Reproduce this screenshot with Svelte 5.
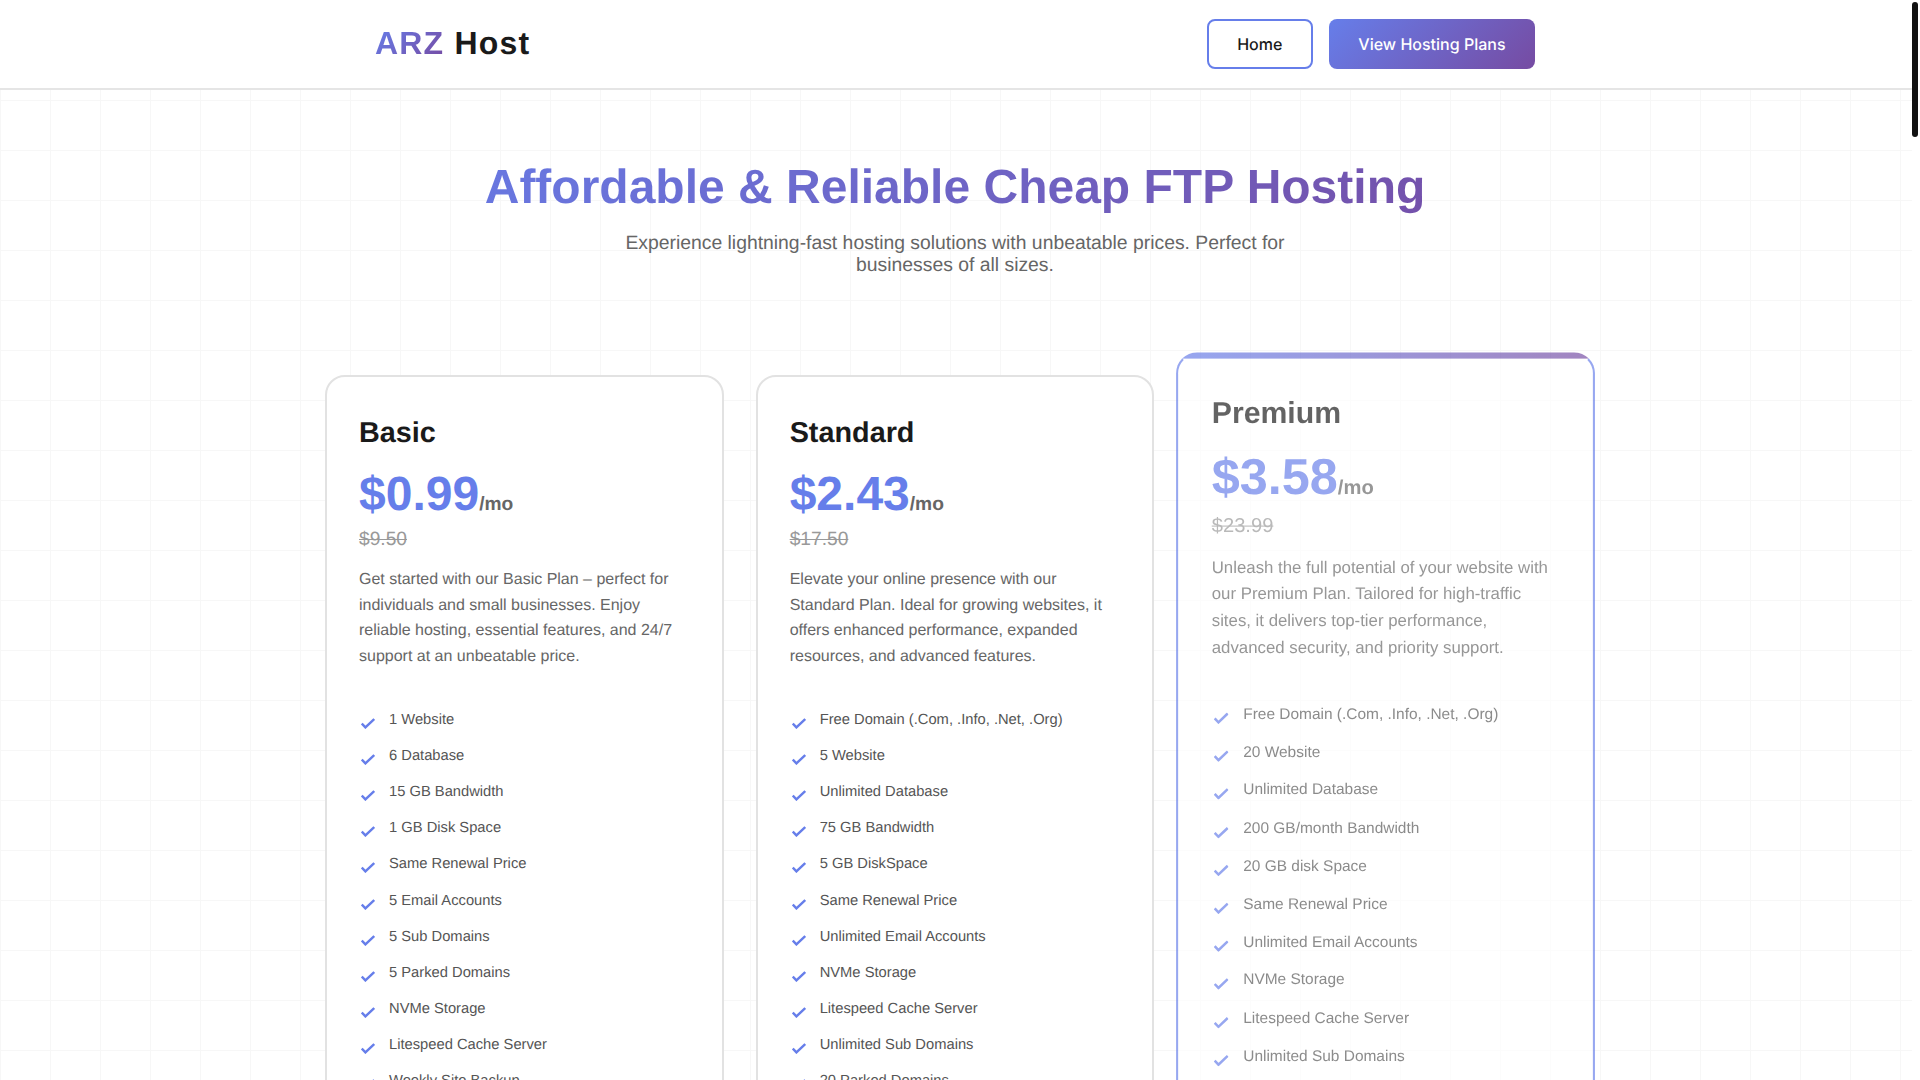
<script>
  const plans = [
    {
      name: 'Basic', price: '$0.99', old: '$9.50',
      desc: 'Get started with our Basic Plan – perfect for individuals and small businesses. Enjoy reliable hosting, essential features, and 24/7 support at an unbeatable price.',
      features: ['1 Website','6 Database','15 GB Bandwidth','1 GB Disk Space','Same Renewal Price','5 Email Accounts','5 Sub Domains','5 Parked Domains','NVMe Storage','Litespeed Cache Server','Weekly Site Backup','Free SSL Certificate','24/7 Support']
    },
    {
      name: 'Standard', price: '$2.43', old: '$17.50',
      desc: 'Elevate your online presence with our Standard Plan. Ideal for growing websites, it offers enhanced performance, expanded resources, and advanced features.',
      features: ['Free Domain (.Com, .Info, .Net, .Org)','5 Website','Unlimited Database','75 GB Bandwidth','5 GB DiskSpace','Same Renewal Price','Unlimited Email Accounts','NVMe Storage','Litespeed Cache Server','Unlimited Sub Domains','20 Parked Domains','Weekly Site Backup','24/7 Support']
    },
    {
      name: 'Premium', price: '$3.58', old: '$23.99', featured: true,
      desc: 'Unleash the full potential of your website with our Premium Plan. Tailored for high-traffic sites, it delivers top-tier performance, advanced security, and priority support.',
      features: ['Free Domain (.Com, .Info, .Net, .Org)','20 Website','Unlimited Database','200 GB/month Bandwidth','20 GB disk Space','Same Renewal Price','Unlimited Email Accounts','NVMe Storage','Litespeed Cache Server','Unlimited Sub Domains','Unlimited Parked Domains','Daily Site Backup','24/7 Support']
    }
  ];
</script>

<div class="page">
  <header class="header">
    <div class="bar">
      <div class="logo"><span class="accent">ARZ</span> Host</div>
      <nav class="nav">
        <a class="btn ghost" href="#home">Home</a>
        <a class="btn solid" href="#plans">View Hosting Plans</a>
      </nav>
    </div>
  </header>

  <div class="content">
    <main class="main">
      <section class="hero">
        <h1>Affordable &amp; Reliable Cheap FTP Hosting</h1>
        <p>Experience lightning-fast hosting solutions with unbeatable prices. Perfect for businesses of all sizes.</p>
      </section>

      <section class="grid" id="plans">
        {#each plans as plan}
          <article class="card" class:featured={plan.featured}>
            <h2>{plan.name}</h2>
            <div class="price">{plan.price}<span>/mo</span></div>
            <div class="old">{plan.old}</div>
            <p class="desc">{plan.desc}</p>
            <ul>
              {#each plan.features as f}
                <li>
                  <svg viewBox="0 0 14 11" width="14" height="11" aria-hidden="true"><path d="M0.8 5.6 4.4 9.4 13.2 1" /></svg>
                  <span>{f}</span>
                </li>
              {/each}
            </ul>
            <a class="btn solid buy" href="#buy">Get Started</a>
          </article>
        {/each}
      </section>
    </main>
  </div>
</div>
<div class="scrollbar" aria-hidden="true"><div class="thumb"></div></div>

<style>
  :global(html) { background: #fff; scrollbar-width: none; }
  :global(body) {
    margin: 0;
    font-family: "Liberation Sans", Arial, sans-serif;
    text-rendering: geometricPrecision;
    background-color: #fff;
    background-image:
      linear-gradient(#f7f7f7 1px, transparent 1px),
      linear-gradient(90deg, #f7f7f7 1px, transparent 1px);
    background-size: 50px 50px;
  }

  .page { min-height: 8640px; margin-right: 8px; }
  .content { padding-right: 2px; }

  .scrollbar {
    position: fixed;
    top: 0;
    right: 0;
    bottom: 0;
    width: 8px;
    background: #fff;
  }
  .thumb {
    position: absolute;
    top: 2px;
    left: 0;
    width: 6px;
    height: 135px;
    border-radius: 3px;
    background: #111;
  }

  .header {
    box-sizing: content-box;
    background: #fff;
    border-bottom: 2px solid #e5e5e5;
    height: 88px;
    padding-right: 2px;
    display: flex;
    align-items: center;
  }
  .bar {
    box-sizing: border-box;
    width: 1200px;
    margin: 0 auto;
    padding: 0 20px;
    display: flex;
    align-items: center;
    justify-content: space-between;
  }
  .logo {
    padding-bottom: 2px;
    font-size: 32px;
    font-weight: 700;
    letter-spacing: 1.2px;
    color: #1a1a1a;
  }
  .accent {
    background: linear-gradient(135deg, #667eea, #764ba2);
    -webkit-background-clip: text;
    background-clip: text;
    color: transparent;
  }
  .nav { display: flex; gap: 16px; }
  .btn {
    box-sizing: border-box;
    height: 50px;
    display: inline-flex;
    align-items: center;
    justify-content: center;
    padding: 0 29.5px;
    border-radius: 8px;
    font-family: Inter, sans-serif;
    font-size: 16px;
    font-weight: 500;
    text-decoration: none;
  }
  .ghost { padding: 0 28.5px; border: 2px solid #667eea; background: #fff; color: #1a1a1a; }
  .solid { background: linear-gradient(135deg, #667eea, #764ba2); color: #fff; }

  .main { box-sizing: border-box; width: 1260px; margin: 0 auto; }
  .hero { text-align: center; padding-top: 69px; }
  .hero h1 {
    margin: 0 0 15px;
    font-size: 48px;
    font-weight: 700;
    line-height: 1.2;
    background: linear-gradient(135deg, #667eea, #764ba2);
    -webkit-background-clip: text;
    background-clip: text;
    color: transparent;
  }
  .hero p {
    margin: 0 auto;
    max-width: 700px;
    font-size: 19.35px;
    line-height: 22px;
    color: #666;
  }

  .grid {
    display: grid;
    grid-template-columns: repeat(3, 1fr);
    gap: 32px;
    margin-top: 99px;
  }
  .card {
    box-sizing: border-box;
    padding: 39px 32px 32px;
    background: #fff;
    border: 2px solid #e2e2e2;
    border-radius: 20px;
    display: flex;
    flex-direction: column;
  }
  .featured {
    border-color: transparent #667eea #667eea;
    background: linear-gradient(90deg, #667eea, #764ba2) top / 100% 6px no-repeat border-box, #fff;
    transform: scale(1.05);
    opacity: 0.68;
  }
  h2 { margin: 0 0 15.5px; font-size: 28.8px; font-weight: 700; color: #1a1a1a; line-height: 1.2; }
  .price { font-size: 48px; font-weight: 700; color: #667eea; line-height: 1.2; }
  .price span { font-size: 19.2px; color: #666; }
  .old { margin-top: 6px; font-size: 19.2px; color: #999; text-decoration: line-through; }
  .desc { margin: 16px 0 42px; font-size: 16px; line-height: 1.6; color: #666; }
  ul { list-style: none; margin: 0 0 16px; padding: 0; }
  li { display: flex; align-items: flex-start; gap: 14px; height: 36.2px; font-size: 14.72px; color: #555; }
  li svg { flex: none; margin: 6px 0 0 2px; fill: none; stroke: #667eea; stroke-width: 2.4; }
  .buy { margin-top: auto; }
</style>
